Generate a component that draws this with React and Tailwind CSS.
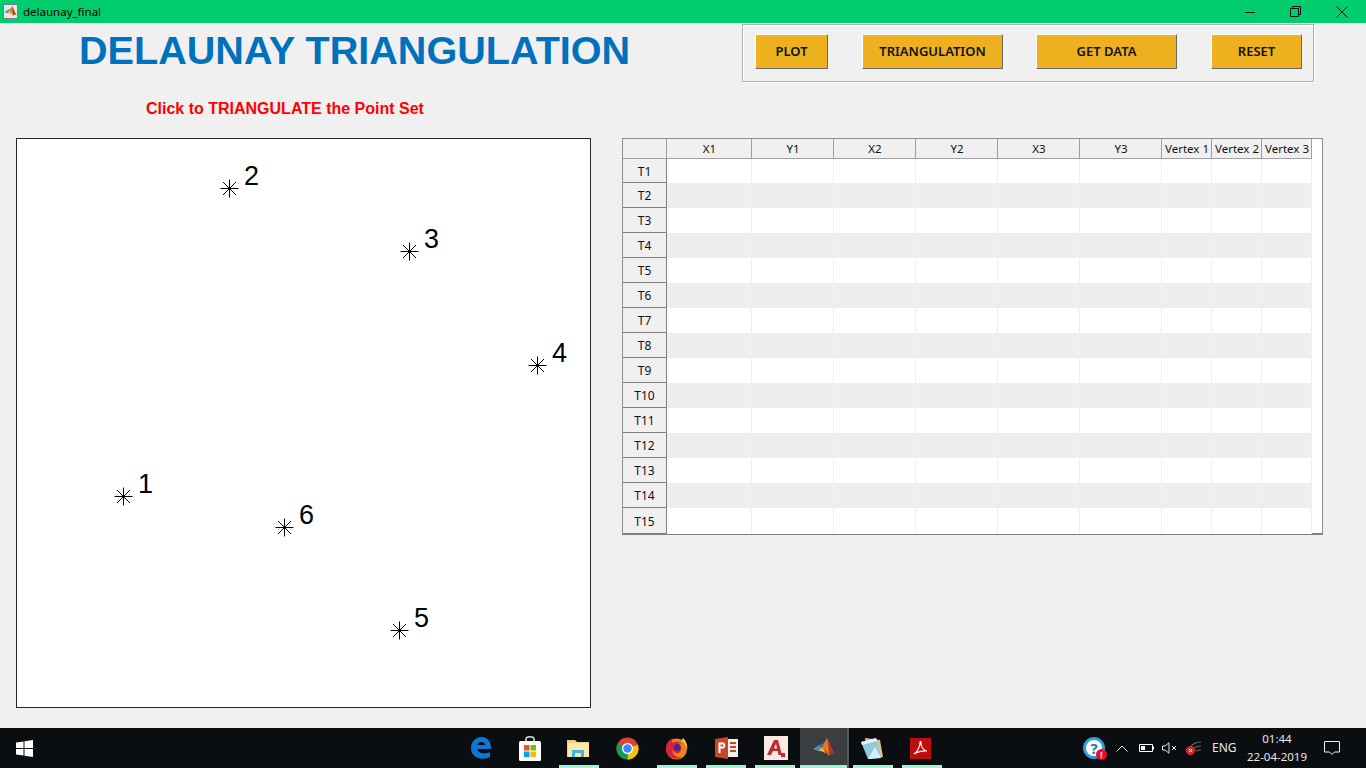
import React from 'react';

const points = [
  { n: 1, x: 106.5, y: 357.5 },
  { n: 2, x: 212.5, y: 49.5 },
  { n: 3, x: 392.5, y: 112.5 },
  { n: 4, x: 520.5, y: 226.5 },
  { n: 5, x: 382.5, y: 491.5 },
  { n: 6, x: 267.5, y: 388.5 },
];

const columns = ['X1', 'Y1', 'X2', 'Y2', 'X3', 'Y3', 'Vertex 1', 'Vertex 2', 'Vertex 3'];
const rows = Array.from({ length: 15 }, (_, i) => `T${i + 1}`);

const buttons = [
  { label: 'PLOT', cls: 'w-[73px] ml-[12px]' },
  { label: 'TRIANGULATION', cls: 'w-[141px] ml-[34px]' },
  { label: 'GET DATA', cls: 'w-[141px] ml-[33px]' },
  { label: 'RESET', cls: 'w-[91px] ml-[34px]' },
];

const MatlabLogo = ({ size = 24 }) => (
  <svg width={size} height={size} viewBox="0 0 24 24">
    <path d="M1 13 L7 9 L10 11 L6 15 Z" fill="#3f8fd2" />
    <path d="M7 9 L10 11 L13 6 L10 8 Z" fill="#2a6fb0" />
    <path d="M10 11 L15 2 C17 5 19 13 23 18 C20 16 19 17 17 20 C15 17 13 14 10 11 Z" fill="#e8782a" />
    <path d="M15 2 C17 5 19 13 23 18 C20 16 19 17 17 20 C17 13 16 7 15 2 Z" fill="#a83a1e" />
    <path d="M6 15 L10 11 C12 13 13 15 14 18 C11 15 9 15 6 15 Z" fill="#f2b233" />
  </svg>
);

const TaskIcon = ({ w, active, children }) => (
  <div className={`relative h-full flex items-center justify-center ${w} ${active ? 'bg-[#3b3e40]' : ''}`}>
    {children}
  </div>
);

const Underline = ({ cls }) => <div className={`absolute bottom-0 h-[3px] bg-[#a5f2d2] ${cls}`} />;

const App = () => {
  return (
    <div className="w-[1366px] h-[768px] overflow-hidden bg-[#f0f0f0] flex flex-col font-['Liberation_Sans',sans-serif]">
      {/* title bar */}
      <div className="h-[23px] bg-[#00ce6c] flex items-center shrink-0">
        <div className="ml-[3px] w-[15px] h-[15px] bg-[#e8e8e8] border border-[#6d7f92] flex items-center justify-center">
          <MatlabLogo size={13} />
        </div>
        <span className="ml-[5px] text-[11.5px] text-black font-['Noto_Sans',sans-serif]">delaunay_final</span>
        <div className="ml-auto flex items-center h-full">
          <svg width="10" height="10" viewBox="0 0 10 10" className="mr-[35px]">
            <path d="M0 5.5 H10" stroke="#111" strokeWidth="1" />
          </svg>
          <svg width="11" height="11" viewBox="0 0 11 11" className="mr-[35px]">
            <path d="M0.5 2.5 H8.5 V10.5 H0.5 Z M2.5 2.5 V0.5 H10.5 V8.5 H8.5" fill="none" stroke="#111" strokeWidth="1" />
          </svg>
          <svg width="12" height="12" viewBox="0 0 12 12" className="mr-[18px]">
            <path d="M0.5 0.5 L11.5 11.5 M11.5 0.5 L0.5 11.5" stroke="#111" strokeWidth="1" />
          </svg>
        </div>
      </div>

      <div className="flex-1 flex flex-col">
        {/* heading and button panel */}
        <div className="flex items-start pt-px h-[59px]">
          <h1 className="ml-[79px] w-[663px] mt-[1px] text-[39.6px] leading-[50px] font-bold text-[#0072bd] whitespace-nowrap">
            DELAUNAY TRIANGULATION
          </h1>
          <div className="w-[572px] h-[58px] pt-[9px] border border-[#b0b0b0] shadow-[1px_1px_0_#ffffff,inset_1px_1px_0_#ffffff] flex items-start">
            {buttons.map((b) => (
              <div
                key={b.label}
                className={`h-[35px] bg-[#edb120] border border-t-white border-l-white border-r-[#696969] border-b-[#696969] flex items-center justify-center text-[13px] font-semibold text-[#111] font-['Noto_Sans',sans-serif] ${b.cls}`}
              >
                {b.label}
              </div>
            ))}
          </div>
        </div>

        <div className="h-[56px] pl-[146px] pt-[17px] text-[16px] leading-[20px] font-bold text-[#ff0000]">
          Click to TRIANGULATE the Point Set
        </div>

        <div className="flex items-start">
          {/* axes */}
          <div className="ml-[16px] w-[575px] h-[570px] bg-white border border-[#262626]">
            <svg width="573" height="568" viewBox="0 0 573 568">
              {points.map((p) => (
                <g key={p.n}>
                  <path
                    d={`M${p.x - 9} ${p.y} H${p.x + 9} M${p.x} ${p.y - 9} V${p.y + 9} M${p.x - 6.5} ${p.y - 6.5} L${p.x + 6.5} ${p.y + 6.5} M${p.x + 6.5} ${p.y - 6.5} L${p.x - 6.5} ${p.y + 6.5}`}
                    stroke="#000"
                    strokeWidth="1"
                    fill="none"
                  />
                  <text x={p.x + 14.5} y={p.y - 3.5} fontSize="27" fill="#000" fontFamily="Liberation Sans, sans-serif">
                    {p.n}
                  </text>
                </g>
              ))}
            </svg>
          </div>

          {/* table */}
          <div className="ml-[31px] w-[701px] h-[397px] bg-white border border-[#8f8f8f] border-b-2 border-b-[#80808a]">
            <div className="grid w-[689px] grid-cols-[44px_85px_82px_82px_82px_82px_82px_50px_50px_50px] grid-rows-[20px_24px_repeat(13,25px)_26px] text-[12px] text-[#111] font-['Noto_Sans',sans-serif]">
              <div className="bg-[#f0f0f0] border-r border-b border-[#a0a0a0]" />
              {columns.map((c) => (
                <div key={c} className="pl-px pt-px bg-[#f0f0f0] border-r border-b border-[#a0a0a0] flex items-center justify-center whitespace-nowrap text-[11.5px]">
                  {c}
                </div>
              ))}
              {rows.map((r, i) => (
                <React.Fragment key={r}>
                  <div className="pt-[2px] bg-[#f0f0f0] border-r border-b border-[#808080] flex items-center justify-center">
                    {r}
                  </div>
                  {columns.map((c) => (
                    <div key={c} className={`border-r border-[#efefef] ${i % 2 ? 'bg-[#eeeeee]' : 'bg-white'}`} />
                  ))}
                </React.Fragment>
              ))}
            </div>
          </div>
        </div>
      </div>

      {/* taskbar */}
      <div className="relative h-[40px] shrink-0 bg-[#0b0e11] flex items-center text-[#e8e8e8] font-['Noto_Sans',sans-serif]">
        <svg width="17" height="17" viewBox="0 0 17 17" className="ml-[16px]">
          <path d="M0 2.5 L7.5 1.4 V8 H0 Z M8.5 1.2 L17 0 V8 H8.5 Z M0 9 H7.5 V15.6 L0 14.5 Z M8.5 9 H17 V17 L8.5 15.8 Z" fill="#fff" />
        </svg>

        <div className="ml-[423px] h-full flex">
          <TaskIcon w="w-[49px]">
            <svg width="22" height="24" viewBox="0 0 22 24">
              <path d="M1 12 C1 5 6 1 12 1 C18 1 21 6 21 13 H7.5 C8 17 14 19 20 16 V21 C12 25 1 22 1 12 Z M7.5 9 H15 C15 5 8 5 7.5 9 Z" fill="#0b78d8" />
            </svg>
          </TaskIcon>
          <TaskIcon w="w-[49px]">
            <svg width="24" height="25" viewBox="0 0 24 25">
              <path d="M8 6 V3 C8 0 16 0 16 3 V6" fill="none" stroke="#ddd" strokeWidth="1.5" />
              <rect x="1" y="5" width="22" height="20" rx="1.5" fill="#fff" />
              <rect x="6" y="9" width="5.5" height="5.5" fill="#f25022" />
              <rect x="12.5" y="9" width="5.5" height="5.5" fill="#7fba00" />
              <rect x="6" y="15.5" width="5.5" height="5.5" fill="#00a4ef" />
              <rect x="12.5" y="15.5" width="5.5" height="5.5" fill="#ffb900" />
            </svg>
          </TaskIcon>
          <TaskIcon w="w-[49px]">
            <svg width="23" height="19" viewBox="0 0 23 19">
              <path d="M0 1 H8 L10 3 H22 V18 H0 Z" fill="#f1d27b" />
              <rect x="1" y="4" width="21" height="14" fill="#fbe8a9" />
              <path d="M5 18 V11 H17 V18 H14 V14 H8 V18 Z" fill="#3fb4e6" />
            </svg>
          </TaskIcon>
          <TaskIcon w="w-[49px]">
            <svg width="23" height="23" viewBox="0 0 24 24">
              <circle cx="12" cy="12" r="11.5" fill="#db4437" />
              <path d="M12 12 L22.8 8 A11.5 11.5 0 0 1 12 23.5 Z" fill="#f4c20d" />
              <path d="M12 12 L12 23.5 A11.5 11.5 0 0 1 2 6.5 Z" fill="#0f9d58" />
              <circle cx="12" cy="12" r="5.8" fill="#fff" />
              <circle cx="12" cy="12" r="4.4" fill="#4285f4" />
            </svg>
          </TaskIcon>
          <TaskIcon w="w-[49px]">
            <svg width="23" height="23" viewBox="0 0 24 24">
              <circle cx="12" cy="12.5" r="11" fill="#f0821e" />
              <path d="M1 12 C1 5 6 2 9 1 C7 3 7 5 8 6 C11 4 15 4 18 7 C16 6 12 7 12 9 C16 9 18 12 16 15 C14 18 9 17 8 13 C7 17 11 22 17 21 C12 25 1 22 1 12 Z" fill="#d6203f" />
              <circle cx="13" cy="11" r="3.6" fill="#4a2a8f" />
              <path d="M19 1 C22 4 24 9 23 13 C22 9 20 5 17 4 Z" fill="#ffcb2e" />
            </svg>
          </TaskIcon>
          <TaskIcon w="w-[50px]">
            <svg width="23" height="22" viewBox="0 0 23 22">
              <rect x="10" y="2" width="13" height="18" fill="#f4f0ec" />
              <path d="M0 2 L13 0 V22 L0 20 Z" fill="#c8452a" />
              <path d="M3.5 5.5 H8 C11 5.5 11 11.5 8 11.5 H5.5 V16 H3.5 Z M5.5 7.5 V9.5 H7.5 C9 9.5 9 7.5 7.5 7.5 Z" fill="#fff" />
              <rect x="15" y="5" width="6" height="2" fill="#c8452a" />
              <rect x="15" y="9" width="6" height="2" fill="#c8452a" />
              <rect x="15" y="13" width="6" height="2" fill="#c8452a" />
            </svg>
          </TaskIcon>
          <TaskIcon w="w-[49px]">
            <div className="w-[24px] h-[24px] bg-[#fbeae4] relative flex items-center justify-center">
              <svg width="20" height="20" viewBox="0 0 20 20">
                <path d="M1 17 L8 2 H12 L16 17 H12.5 L11.5 13 H7 L5 17 Z M8 10.5 H11 L10 5.5 Z" fill="#b92e35" />
                <rect x="15" y="15" width="4" height="4" fill="#d3222a" />
              </svg>
            </div>
          </TaskIcon>
          <TaskIcon w="w-[47px]" active>
            <MatlabLogo size={24} />
          </TaskIcon>
          <div className="w-[2px] h-full bg-[#55585a]" />
          <TaskIcon w="w-[45px]">
            <svg width="24" height="23" viewBox="0 0 24 23">
              <path d="M5 1 L20 3 L23 20 L8 22 Z" fill="#d9c48d" />
              <path d="M1 5 L16 1 L21 21 L8 22 Z" fill="#8fcbdc" />
              <path d="M1 5 L16 1 L17 4 L2 8 Z" fill="#e6f2f5" />
              <path d="M8 22 L21 21 L15 10 Z" fill="#d8edf3" />
            </svg>
          </TaskIcon>
          <TaskIcon w="w-[52px]">
            <div className="w-[21px] h-[21px] bg-[#c00d0d] flex items-center justify-center">
              <svg width="15" height="15" viewBox="0 0 15 15">
                <path d="M1 13 C4 11 7 6 7 2 C7 0 8 0 8 2 C8 6 11 10 14 10 C11 9.5 5 10.5 1 13 Z" fill="none" stroke="#fff" strokeWidth="1.2" />
              </svg>
            </div>
          </TaskIcon>
        </div>

        <Underline cls="left-[559px] w-[40px]" />
        <Underline cls="left-[657px] w-[40px]" />
        <Underline cls="left-[706px] w-[40px]" />
        <Underline cls="left-[755px] w-[40px]" />
        <Underline cls="left-[800px] w-[47px]" />
        <Underline cls="left-[853px] w-[40px]" />
        <Underline cls="left-[902px] w-[40px]" />

        {/* tray */}
        <div className="ml-auto flex items-center h-full">
          <div className="relative w-[22px] h-[22px] rounded-full bg-white border-[3px] border-[#2b9fe0] flex items-center justify-center text-[15px] leading-none font-bold text-[#1b78c4]">
            ?
            <div className="absolute -right-[5px] -bottom-[4px] w-[11px] h-[11px] rounded-full bg-[#e81123] text-white text-[8px] leading-[11px] text-center">!</div>
          </div>
          <svg width="12" height="7" viewBox="0 0 12 7" className="ml-[11px]">
            <path d="M0.5 6.5 L6 1 L11.5 6.5" fill="none" stroke="#e8e8e8" strokeWidth="1" />
          </svg>
          <svg width="15" height="8" viewBox="0 0 15 8" className="ml-[11px]">
            <path d="M0.5 0.5 H13.5 V7.5 H0.5 Z" fill="none" stroke="#fff" />
            <rect x="2" y="2" width="4" height="4" fill="#fff" />
            <rect x="14" y="2.5" width="1" height="3" fill="#fff" />
          </svg>
          <svg width="15" height="12" viewBox="0 0 15 12" className="ml-[8px]">
            <path d="M0.5 4 H3 L7 0.8 V11.2 L3 8 H0.5 Z" fill="none" stroke="#e8e8e8" />
            <path d="M10 4 L14 8 M14 4 L10 8" stroke="#e8e8e8" />
          </svg>
          <svg width="16" height="14" viewBox="0 0 16 14" className="ml-[9px]">
            <path d="M5 5 C8 2 12 1 15 1 M7 8 C9 6 12 5 15 5 M10 10 C11 9 13 9 15 9" fill="none" stroke="#666" strokeWidth="1.2" />
            <circle cx="4.5" cy="9.5" r="4.5" fill="#d9262f" />
            <path d="M3 8 L6 11 M6 8 L3 11" stroke="#fff" />
          </svg>
          <span className="ml-[10px] text-[12px] w-[25px]">ENG</span>
          <div className="ml-[11px] w-[58px] flex flex-col items-center text-[11.5px] leading-[18px] whitespace-nowrap">
            <span>01:44</span>
            <span>22-04-2019</span>
          </div>
          <svg width="16" height="16" viewBox="0 0 16 16" className="ml-[18px] mr-[26px]">
            <path d="M0.5 1.5 H15.5 V12 H10.5 L8 14.5 L5.5 12 H0.5 Z" fill="none" stroke="#f0f0f0" />
          </svg>
        </div>
      </div>
    </div>
  );
};

export default App;
